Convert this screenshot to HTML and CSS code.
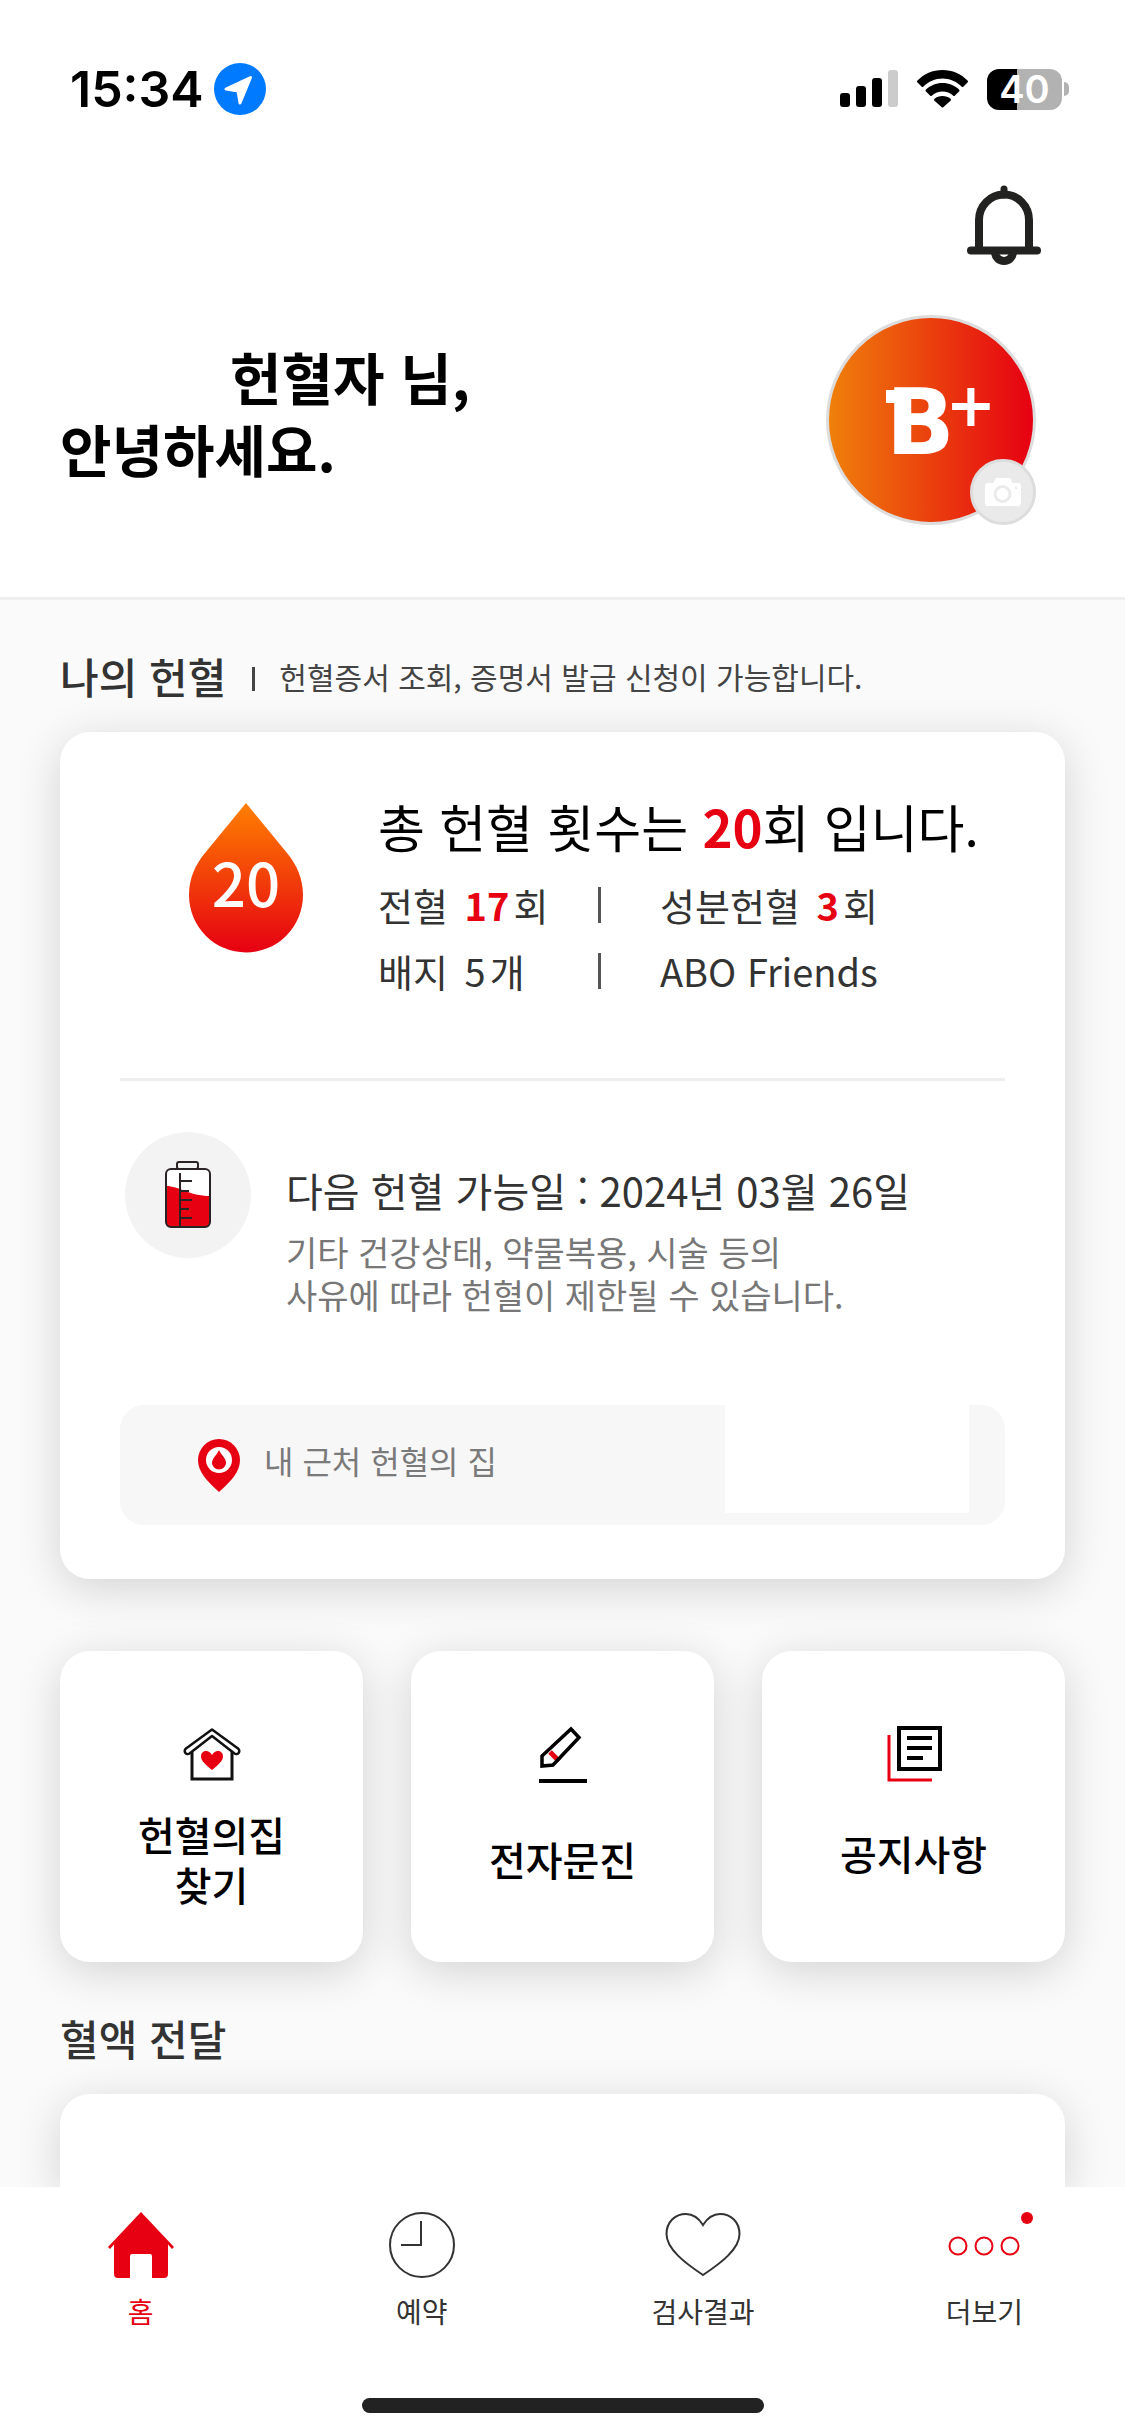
FILE: index.html
```html
<!DOCTYPE html>
<html lang="ko">
<head>
<meta charset="utf-8">
<meta name="viewport" content="width=device-width, initial-scale=1">
<title>헌혈</title>
<link rel="stylesheet" href="styles.css">
</head>
<body>
<div class="app">
  <header class="header">
    <div class="status">
      <div class="status-left">
        <span class="time">15:34</span>
        <svg width="52" height="52" viewBox="0 0 52 52" aria-hidden="true"><circle cx="26" cy="26" r="26" fill="#007aff"/><path d="M36.500 14.500 12 26 24 28 26 40z" fill="#fff" stroke="#fff" stroke-width="3" stroke-linejoin="round"/></svg>
      </div>
      <div class="status-right">
        <svg width="58" height="38" viewBox="0 0 58 38" aria-hidden="true"><rect y="23" width="10" height="14" rx="3"/><rect x="16" y="16" width="10" height="21" rx="3"/><rect x="32" y="8" width="10" height="29" rx="3"/><rect x="48" width="10" height="37" rx="3" fill="#ccc"/></svg>
        <svg width="51" height="38" viewBox="0 0 51 38" aria-hidden="true"><path d="M25.500 0C35.500 0 44 4 50.500 10.500q1 1 0 2L46.500 16.500q-1 1-2 0C39.500 11.500 33 8.500 25.500 8.500S11.500 11.500 6.500 16.500q-1 1-2 0L.5 12.500q-1-1 0-2C7 4 15.500 0 25.500 0zM25.500 13C32 13 37.500 15.500 42 19.500q1 1 0 2L38 25.500q-1 1-2 0C33 23 29.500 21.500 25.500 21.500S18 23 15 25.500q-1 1-2 0L9 21.500q-1-1 0-2C13.500 15.500 19 13 25.500 13zM25.500 26C28.500 26 31.500 27 33.500 28.700q1 1 0 2L26.500 37q-1 1-2 0L17.500 30.700q-1-1 0-2C19.500 27 22.500 26 25.500 26z"/></svg>
        <div class="battery"><span class="battery-level">40</span><span class="battery-nub"></span></div>
      </div>
    </div>
    <button class="bell" type="button" aria-label="알림">
      <svg width="74" height="80" viewBox="0 0 74 80" fill="none" stroke="#222220" aria-hidden="true"><path d="M12 64V35a25 25.500 0 0 1 50 0V64" stroke-width="8"/><path d="M37 4V10" stroke-width="7" stroke-linecap="round"/><path d="M4 65.500H70" stroke-width="8" stroke-linecap="round"/><path d="M28 67a9 9 0 0 0 18 0" stroke-width="8"/></svg>
    </button>
    <div class="profile">
      <h1 class="greeting"><span class="nickname"></span>헌혈자 님,<br>안녕하세요.</h1>
      <div class="avatar">
        <span class="blood">B</span><span class="rh">+</span>
        <button class="camera" type="button" aria-label="사진 변경">
          <svg width="36" height="28" viewBox="0 0 36 28" aria-hidden="true"><path d="M3 5H8.500L10 1.500Q10.500 0 12 0H24Q25.500 0 26 1.500L27.500 5H33q3 0 3 3V25q0 3-3 3H3q-3 0-3-3V8q0-3 3-3z" fill="#fff"/><circle cx="17.500" cy="16" r="7.500" fill="none" stroke="#eaeaea" stroke-width="3"/><circle cx="31" cy="10" r="1" fill="#ddd"/></svg>
        </button>
      </div>
    </div>
  </header>

  <main class="main">
    <div class="section-head">
      <h2 class="section-title">나의 헌혈</h2>
      <span class="section-bar"></span>
      <p class="section-note">헌혈증서 조회, 증명서 발급 신청이 가능합니다.</p>
    </div>
    <section class="card">
      <div class="summary">
        <div class="drop">
          <svg width="114" height="150" viewBox="0 0 114 150" aria-hidden="true"><defs><linearGradient id="dropFill" x1="0" y1="0" x2="0" y2="1"><stop offset="0" stop-color="#ff8000"/><stop offset="1" stop-color="#e60012"/></linearGradient></defs><path d="M57 0 98 50C108 62 114 76 114 92A57 57.500 0 0 1 0 92C0 76 6 62 16 50z" fill="url(#dropFill)"/></svg>
          <span class="drop-count">20</span>
        </div>
        <div>
          <p class="total">총 헌혈 횟수는 <b>20</b>회 입니다.</p>
          <div class="stats">
            <span>전혈 <b class="count">17</b>회</span><i class="stat-bar"></i><span>성분헌혈 <b class="count">3</b>회</span>
            <span>배지 <span class="count">5</span>개</span><i class="stat-bar"></i><span>ABO Friends</span>
          </div>
        </div>
      </div>
      <div class="next">
        <div class="next-icon">
          <svg width="46" height="70" viewBox="0 0 46 70" aria-hidden="true"><rect x="1" y="9" width="44" height="58" rx="5" fill="#fff"/><path d="M1 26C14 26 24 36 45 36V62q0 5-5 5H6q-5 0-5-5z" fill="#e60012"/><g fill="none" stroke="#2b2223" stroke-width="2"><rect x="1" y="9" width="44" height="58" rx="5"/><rect x="12" y="2" width="21" height="7" rx="2"/><path d="M15 13V67M15 21H27M15 31H24M15 40H27M15 49H24M15 58H27"/></g></svg>
        </div>
        <div class="next-text">
          <h3 class="next-date">다음 헌혈 가능일 : 2024년 03월 26일</h3>
          <p class="next-note">기타 건강상태, 약물복용, 시술 등의<br>사유에 따라 헌혈이 제한될 수 있습니다.</p>
        </div>
      </div>
      <a class="nearby" href="#nearby">
        <svg width="42" height="53" viewBox="0 0 42 53" aria-hidden="true"><path d="M21 0A21 21 0 0 1 42 21C42 33 33 42 21 53 9 42 0 33 0 21A21 21 0 0 1 21 0z" fill="#e60012"/><circle cx="21" cy="21" r="13" fill="#fff"/><path d="M21 11C23 16 28 19 28 24a7 6.500 0 0 1-14 0C14 19 19 16 21 11z" fill="#e60012"/></svg>
        <span class="nearby-label">내 근처 헌혈의 집</span>
        <span class="nearby-value"></span>
      </a>
    </section>

    <div class="tiles">
      <a class="tile" href="#house">
        <svg width="60" height="60" viewBox="0 0 60 60" fill="none" stroke="#111" aria-hidden="true"><path d="M10 27V54H50V27" stroke-width="3"/><path d="M30 4.500 56 23.500a3 3 0 0 1-3.500 5L30 11 7.500 28.500a3 3 0 0 1-3.500-5z" stroke-width="2.500" stroke-linejoin="round"/><path d="M30 45C24 40 19 36 19 31.500 19 25 27 24 30 30 33 24 41 25 41 31.500 41 36 36 40 30 45z" fill="#e60012" stroke="none"/></svg>
        <span class="tile-label">헌혈의집<br>찾기</span>
      </a>
      <a class="tile" href="#form">
        <svg width="60" height="60" viewBox="0 0 60 60" fill="none" stroke="#000" stroke-width="4" aria-hidden="true"><path d="M17 27 26 36" stroke="#e60012" stroke-width="5"/><path d="M38 4 46 12.500 20 40 9 41V31z" stroke-width="3.500"/><path d="M6 56H54"/></svg>
        <span class="tile-label">전자문진</span>
      </a>
      <a class="tile" href="#notice">
        <svg width="60" height="60" viewBox="0 0 60 60" fill="none" stroke="#000" stroke-width="3" aria-hidden="true"><path d="M5 10V55H48" stroke="#e60012"/><rect x="15" y="3" width="41" height="41" stroke-width="4"/><path d="M23 13H48M23 23H48M23 33H39" stroke-width="4"/></svg>
        <span class="tile-label tile-label-high">공지사항</span>
      </a>
    </div>

    <div class="section-head">
      <h2 class="section-title">혈액 전달</h2>
    </div>
    <section class="card card-peek"></section>
  </main>

  <nav class="nav">
    <div class="tabs">
      <a class="tab tab-active" href="#home">
        <svg width="66" height="66" viewBox="0 0 66 66" aria-hidden="true"><path d="M33 0 66 35 64 37 60 32.500V62q0 4-4 4H44V44q0-2-2-2H24q-2 0-2 2V66H10q-4 0-4-4V32.500L2 37 0 35z" fill="#e60012"/></svg>
        <span>홈</span>
      </a>
      <a class="tab" href="#booking">
        <svg width="66" height="66" viewBox="0 0 66 66" fill="none" stroke="#333" stroke-width="2" aria-hidden="true"><circle cx="33" cy="33" r="32"/><path d="M32 9V33H12"/></svg>
        <span>예약</span>
      </a>
      <a class="tab" href="#results">
        <svg width="76" height="66" viewBox="0 0 76 66" fill="none" stroke="#333" stroke-width="2" aria-hidden="true"><path d="M38 13C33 5 28 2 21 2 10 2 1.500 10 1.500 22 1.500 37 20 51 38 63 56 51 74.500 37 74.500 22 74.500 10 66 2 55 2 48 2 43 5 38 13z"/></svg>
        <span>검사결과</span>
      </a>
      <a class="tab" href="#more">
        <svg width="100" height="66" viewBox="0 0 100 66" fill="none" stroke="#e60012" stroke-width="2" aria-hidden="true"><circle cx="24" cy="34" r="8.500"/><circle cx="50" cy="34" r="8.500"/><circle cx="76" cy="34" r="8.500"/><circle cx="93" cy="6" r="6" fill="#e60012" stroke="none"/></svg>
        <span>더보기</span>
      </a>
    </div>
    <div class="home-indicator"></div>
  </nav>
</div>
</body>
</html>
```
FILE: styles.css
```css
* {
  box-sizing: border-box;
}

body,
h1,
h2,
h3,
p {
  margin: 0;
}

body {
  font-family: "Noto Sans CJK KR", "Noto Sans", sans-serif;
  color: #333;
  background: #fff;
}

a {
  color: inherit;
  text-decoration: none;
}

button {
  padding: 0;
  border: 0;
  background: none;
}

svg {
  display: block;
  flex: none;
}

.app {
  display: flex;
  flex-direction: column;
  min-height: 100vh;
}

/* Header */
.header {
  padding: 0 84px 72px 60px;
  border-bottom: 3px solid #eee;
}

.status {
  display: flex;
  justify-content: space-between;
  align-items: center;
  height: 178px;
  margin-right: -28px;
  padding-left: 10px;
  font-family: Inter, sans-serif;
  color: #000;
}

.status-left {
  display: flex;
  align-items: center;
  gap: 10px;
}

.time {
  font-size: 50px;
  line-height: 60px;
  font-weight: 600;
}

.status-right {
  display: flex;
  align-items: center;
  gap: 19px;
}

.battery {
  display: flex;
  align-items: center;
  gap: 2px;
}

.battery-level {
  width: 75px;
  border-radius: 12px;
  background: linear-gradient(to right, #000 40%, #b2b2b2 40%);
  color: #fff;
  font-size: 38px;
  line-height: 41px;
  font-weight: 600;
  text-align: center;
}

.battery-nub {
  width: 5px;
  height: 14px;
  border-radius: 0 6px 6px 0;
  background: #b2b2b2;
}

.bell {
  display: block;
  margin: 7px 0 50px auto;
}

.profile {
  display: flex;
  justify-content: space-between;
  align-items: center;
}

.greeting {
  padding-bottom: 16px;
  font-size: 56px;
  line-height: 72px;
  font-weight: 700;
  color: #000;
}

.nickname {
  display: inline-block;
  width: 170px;
}

.avatar {
  position: relative;
  display: flex;
  justify-content: center;
  width: 210px;
  height: 210px;
  margin-right: 5px;
  padding: 52px 0 0 20px;
  border: 3px solid #ddd;
  border-radius: 50%;
  background: linear-gradient(to right, #ef800a, #e60012);
  color: #fff;
  font-family: "DejaVu Sans", sans-serif;
  font-weight: 700;
}

.blood {
  position: relative;
  font-size: 90px;
  line-height: 105px;
}

/* Slab at the top of the letter's stem */
.blood::before {
  content: "";
  position: absolute;
  top: 20px;
  left: 0;
  width: 12px;
  height: 13px;
  background: #fff;
}

.rh {
  margin-left: -9px;
  font-size: 60px;
  line-height: 70px;
}

.camera {
  position: absolute;
  right: -3px;
  bottom: -3px;
  display: flex;
  justify-content: center;
  align-items: center;
  width: 66px;
  height: 66px;
  border: 3px solid #ddd;
  border-radius: 50%;
  background: #eaeaea;
}

/* Content */
.main {
  display: flex;
  flex: 1;
  flex-direction: column;
  padding: 0 60px;
  background: #fafafa;
}

.section-head {
  display: flex;
  align-items: center;
  margin: 46px 0 26px;
}

.section-title {
  font-size: 42px;
  line-height: 60px;
  font-weight: 500;
}

.section-bar {
  width: 3px;
  height: 24px;
  margin: 6px 24px 0 26px;
  background: #444;
}

.section-note {
  font-size: 30px;
  line-height: 60px;
  color: #444;
}

.card {
  padding: 58px 60px 54px;
  border-radius: 30px;
  background: #fff;
  box-shadow: 0 9px 45px rgba(0, 0, 0, 0.16);
}

.card-peek {
  flex: 1;
  min-height: 93px;
  padding: 0;
  border-radius: 30px 30px 0 0;
}

.summary {
  display: grid;
  grid-template-columns: 252px 1fr;
  gap: 6px;
  padding-bottom: 74px;
  border-bottom: 3px solid #eee;
}

.summary b {
  color: #e60012;
  font-weight: 700;
}

.drop {
  display: grid;
  justify-content: center;
  align-content: start;
  padding-top: 13px;
}

.drop svg,
.drop-count {
  grid-area: 1 / 1;
}

.drop-count {
  padding-top: 42px;
  color: #fff;
  font-size: 60px;
  line-height: 72px;
  font-weight: 500;
  text-align: center;
}

.total {
  margin-bottom: 10px;
  color: #000;
  font-size: 51px;
  line-height: 72px;
}

.stats {
  display: grid;
  grid-template-columns: 160px 122px 1fr;
  align-items: center;
  font-size: 38px;
  line-height: 66px;
  white-space: nowrap;
}

.count {
  margin: 0 4px 0 6px;
}

.stat-bar {
  justify-self: center;
  width: 3px;
  height: 36px;
  background: #555;
}

.next {
  display: flex;
  gap: 35px;
  padding: 51px 0 89px 5px;
}

.next-icon {
  display: flex;
  flex: none;
  justify-content: center;
  align-items: center;
  width: 126px;
  height: 126px;
  border-radius: 50%;
  background: #f3f3f3;
}

.next-text {
  padding-top: 30px;
}

.next-date {
  margin-bottom: 12px;
  font-size: 40px;
  line-height: 56px;
  font-weight: 400;
}

.next-note {
  color: #777;
  font-size: 34px;
  line-height: 43px;
}

.nearby {
  display: flex;
  align-items: center;
  height: 120px;
  padding: 0 36px 0 78px;
  border-radius: 24px;
  background: #f7f7f7;
}

.nearby-label {
  padding: 0 0 10px 24px;
  color: #7a7a7a;
  font-size: 32px;
  line-height: 40px;
}

.nearby-value {
  align-self: flex-start;
  width: 244px;
  height: 108px;
  margin-left: auto;
  background: #fff;
}

.tiles {
  display: grid;
  grid-template-columns: repeat(3, 1fr);
  gap: 48px;
  margin-top: 72px;
}

.tile {
  display: flex;
  flex-direction: column;
  align-items: center;
  gap: 24px;
  padding: 74px 0 53px;
  border-radius: 30px;
  background: #fff;
  box-shadow: 0 9px 45px rgba(0, 0, 0, 0.16);
}

.tile-label {
  display: flex;
  align-items: center;
  min-height: 100px;
  color: #000;
  font-size: 40px;
  line-height: 50px;
  font-weight: 500;
  text-align: center;
}

.tile-label-high {
  padding-bottom: 12px;
}

/* Bottom navigation */
.nav {
  position: relative;
  padding: 25px 0 24px;
  background: #fff;
}

.tabs {
  display: grid;
  grid-template-columns: repeat(4, 1fr);
}

.tab {
  display: flex;
  flex-direction: column;
  align-items: center;
  gap: 13px;
  font-size: 28px;
  line-height: 40px;
}

.tab-active {
  color: #e60012;
}

.home-indicator {
  width: 402px;
  height: 15px;
  margin: 67px auto 0;
  border-radius: 8px;
  background: #222;
}
```
